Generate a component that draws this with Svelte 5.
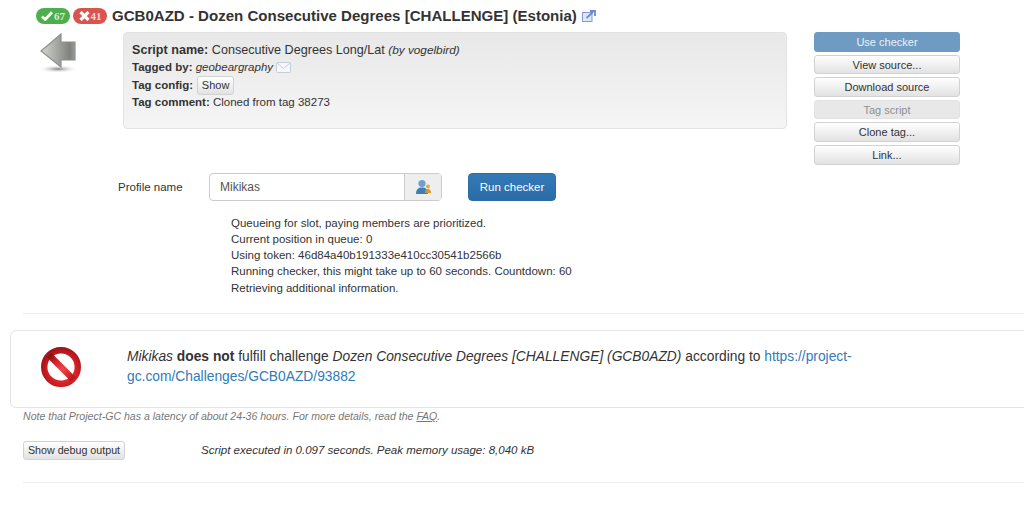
<script>
  const actions = [
    { label: 'Use checker', kind: 'primary' },
    { label: 'View source...', kind: '' },
    { label: 'Download source', kind: '' },
    { label: 'Tag script', kind: 'disabled' },
    { label: 'Clone tag...', kind: '' },
    { label: 'Link...', kind: '' }
  ];

  const log = [
    'Queueing for slot, paying members are prioritized.',
    'Current position in queue: 0',
    'Using token: 46d84a40b191333e410cc30541b2566b',
    'Running checker, this might take up to 60 seconds. Countdown: 60',
    'Retrieving additional information.'
  ];
</script>

<div class="page">
  <header class="title-row">
    <span class="pill pill-good">
      <svg width="12" height="10" viewBox="0 0 12 10"><path d="M1 5.5 L4.2 8.5 L11 1.2" fill="none" stroke="#fff" stroke-width="2.8" /></svg>
      <b>67</b>
    </span>
    <span class="pill pill-bad">
      <svg width="11" height="10" viewBox="0 0 11 10"><path d="M1.5 1 L9.5 9 M9.5 1 L1.5 9" fill="none" stroke="#fff" stroke-width="3.2" /></svg>
      <b>41</b>
    </span>
    <h1>GCB0AZD - Dozen Consecutive Degrees [CHALLENGE] (Estonia)</h1>
    <svg class="ext" width="14" height="12" viewBox="0 0 14 12">
      <rect x="0.5" y="2.5" width="9.5" height="9" fill="#dfe6f6" stroke="#8299d2" />
      <path d="M4.5 8 L11 2 M8 1 H13 V6" fill="none" stroke="#6d8bd0" stroke-width="1.8" />
    </svg>
  </header>

  <section class="top">
    <div class="back">
      <svg width="42" height="42" viewBox="0 0 42 42">
        <defs>
          <linearGradient id="arrowFill" x1="0" x2="1" y1="0" y2="0">
            <stop offset="0" stop-color="#d4d6d0" />
            <stop offset="0.85" stop-color="#7f817d" />
            <stop offset="1" stop-color="#9b9d99" />
          </linearGradient>
          <radialGradient id="arrowShadow">
            <stop offset="0" stop-color="#808080" />
            <stop offset="1" stop-color="#fff" stop-opacity="0" />
          </radialGradient>
        </defs>
        <ellipse cx="18" cy="36" rx="20" ry="4" fill="url(#arrowShadow)" />
        <path d="M1 18 L21 1 V9 H35 V27 H21 V34 Z" fill="url(#arrowFill)" stroke="#8e908c" stroke-width="1.2" />
      </svg>
    </div>

    <div class="info">
      <p class="script"><b>Script name:</b> Consecutive Degrees Long/Lat <i class="by">(by vogelbird)</i></p>
      <p>
        <b>Tagged by:</b> <i>geobeargraphy</i>
        <svg class="mail" width="15" height="11" viewBox="0 0 15 11">
          <rect x="0.5" y="0.5" width="14" height="10" rx="1" fill="#f6f8fc" stroke="#c3ccd8" />
          <path d="M1 1 L7.5 6.5 L14 1" fill="none" stroke="#c3ccd8" />
        </svg>
      </p>
      <p class="config"><b>Tag config:</b> <button class="btn small">Show</button></p>
      <p><b>Tag comment:</b> Cloned from tag 38273</p>
    </div>

    <div class="actions">
      {#each actions as action}
        <button class="btn action {action.kind}">{action.label}</button>
      {/each}
    </div>
  </section>

  <section class="form-row">
    <span class="label">Profile name</span>
    <div class="input-group">
      <div class="input">Mikikas</div>
      <div class="addon">
        <svg width="16" height="15" viewBox="0 0 16 15">
          <circle cx="7" cy="4.5" r="3.6" fill="#6f9fd0" />
          <path d="M1 15 C1 10 3.5 8.5 7 8.5 C10.5 8.5 13 10 13 15 Z" fill="#3f7db5" />
          <circle cx="13" cy="7.5" r="1.9" fill="#e8a63c" />
          <path d="M10 14 C10 11 11.5 10 13 10 C14.5 10 16 11 16 14 Z" fill="#d8962e" />
        </svg>
      </div>
    </div>
    <button class="run">Run checker</button>
  </section>

  <section class="log">
    {#each log as line}
      <div>{line}</div>
    {/each}
  </section>

  <hr class="after-log" />

  <section class="result">
    <div class="result-icon">
      <svg width="42" height="42" viewBox="0 0 42 42">
        <defs>
          <radialGradient id="stopRing" cx="0.55" cy="0.6" r="0.75">
            <stop offset="0" stop-color="#f2474b" />
            <stop offset="0.6" stop-color="#cf1f23" />
            <stop offset="1" stop-color="#8f1012" />
          </radialGradient>
        </defs>
        <circle cx="21" cy="21" r="16.8" fill="#fff" stroke="url(#stopRing)" stroke-width="6.4" />
        <path d="M9 9 L33 33" stroke="url(#stopRing)" stroke-width="6.4" />
      </svg>
    </div>
    <p>
      <i>Mikikas</i> <b>does not</b> fulfill challenge <i>Dozen Consecutive Degrees [CHALLENGE] (GCB0AZD)</i> according to
      <span class="link">https://project-<wbr />gc.com/Challenges/GCB0AZD/93882</span>
    </p>
  </section>

  <p class="note">Note that Project-GC has a latency of about 24-36 hours. For more details, read the <u>FAQ</u>.</p>

  <section class="debug-row">
    <button class="btn debug">Show debug output</button>
    <i>Script executed in 0.097 seconds. Peak memory usage: 8,040 kB</i>
  </section>

  <hr class="last" />
</div>

<style>
  :global(body) {
    margin: 0;
    background: #fff;
  }

  .page {
    width: 1024px;
    height: 528px;
    overflow: hidden;
    font-family: "Liberation Sans", Arial, sans-serif;
    font-size: 11.5px;
    line-height: 17px;
    color: #333;
  }

  .title-row {
    display: flex;
    align-items: center;
    height: 18px;
    padding: 7px 0 0 36px;
  }

  .pill {
    display: flex;
    align-items: center;
    justify-content: center;
    gap: 1px;
    height: 16px;
    width: 34px;
    border-radius: 8px;
    font-family: "Liberation Serif", serif;
    font-size: 11px;
  }

  .pill-good {
    background: #4cae4c;
    color: #d6ecd6;
  }

  .pill-bad {
    background: #d9534f;
    color: #f6d8d6;
    margin-left: 3px;
  }

  h1 {
    margin: 0 5px 0 5px;
    font-size: 15.05px;
    line-height: 18px;
    font-weight: bold;
    color: #333;
  }

  .top {
    display: flex;
    align-items: flex-start;
    margin-top: 7px;
  }

  .back {
    width: 123px;
    box-sizing: border-box;
    padding: 1px 0 0 40px;
    flex: none;
  }

  .info {
    box-sizing: border-box;
    width: 664px;
    height: 97px;
    padding: 9px 8px 0;
    flex: none;
    border: 1px solid #e3e3e3;
    border-radius: 4px;
    background: linear-gradient(#e8e8e8, #f5f5f5);
  }

  .info p {
    margin: 0;
    height: 17.3px;
    line-height: 17.3px;
  }

  .info .script {
    font-size: 12.6px;
  }

  .info .by {
    font-size: 11.8px;
  }

  .info .config {
    display: flex;
    align-items: center;
    gap: 4px;
  }

  .mail {
    vertical-align: -2px;
  }

  .btn {
    box-sizing: border-box;
    padding: 1px 0 0;
    border: 1px solid #d2d2d2;
    border-radius: 3px;
    background: linear-gradient(#fff, #e2e2e2);
    color: #333;
    font: 11px/17px "Liberation Sans", Arial, sans-serif;
    text-align: center;
  }

  .small {
    flex: none;
    width: 37px;
    height: 19px;
    padding: 0;
  }

  .actions {
    display: flex;
    flex-direction: column;
    gap: 3px;
    width: 146px;
    margin-left: 27px;
  }

  .action {
    width: 146px;
    height: 19.6px;
  }

  .action.primary {
    border-color: #6f9bc2;
    background: #6f9bc2;
    color: #eaf1f7;
  }

  .action.disabled {
    border-color: #e2e2e2;
    background: #e8e8e8;
    color: #8f8f8f;
  }

  .form-row {
    display: flex;
    align-items: center;
    margin-top: 8px;
    padding-left: 118px;
  }

  .label {
    width: 91px;
    padding-top: 1px;
  }

  .input-group {
    display: flex;
    width: 233px;
    height: 28px;
    box-sizing: border-box;
    border: 1px solid #ccc;
    border-radius: 4px;
  }

  .input {
    flex: 1;
    padding-left: 10px;
    font-size: 12px;
    line-height: 26px;
    color: #555;
  }

  .addon {
    display: flex;
    align-items: center;
    justify-content: center;
    width: 36px;
    border-left: 1px solid #ccc;
    background: #eee;
  }

  .run {
    width: 88px;
    height: 28px;
    margin-left: 26px;
    border: 1px solid #2e6da4;
    border-radius: 4px;
    background: linear-gradient(#337ab7, #2b6ca6);
    color: #fff;
    font: 11.5px "Liberation Sans", Arial, sans-serif;
  }

  .log {
    margin-top: 14px;
    padding-left: 231px;
    line-height: 16.3px;
  }

  hr {
    height: 1px;
    margin: 16px 0 0 23px;
    border: 0;
    background: #eee;
  }

  hr.after-log {
    margin-top: 17px;
  }

  .result {
    display: flex;
    box-sizing: border-box;
    width: 1030px;
    height: 78px;
    margin: 16px 0 0 10px;
    border: 1px solid #e4e4e4;
    border-radius: 6px;
  }

  .result-icon {
    width: 116px;
    padding: 15px 0 0 29px;
    box-sizing: border-box;
    flex: none;
  }

  .result p {
    width: 735px;
    margin: 16px 0 0;
    font-size: 13.8px;
    line-height: 20px;
  }

  .link {
    color: #337ab7;
  }

  .note {
    margin: 0 0 0 23px;
    font-size: 10.57px;
    font-style: italic;
    line-height: 17px;
    color: #777;
  }

  .debug-row {
    display: flex;
    align-items: center;
    margin: 16px 0 0 23px;
  }

  .debug {
    width: 102px;
    height: 19px;
    margin-right: 76px;
    padding: 0;
    font-size: 10.7px;
  }

  hr.last {
    margin-top: 22px;
  }
</style>
